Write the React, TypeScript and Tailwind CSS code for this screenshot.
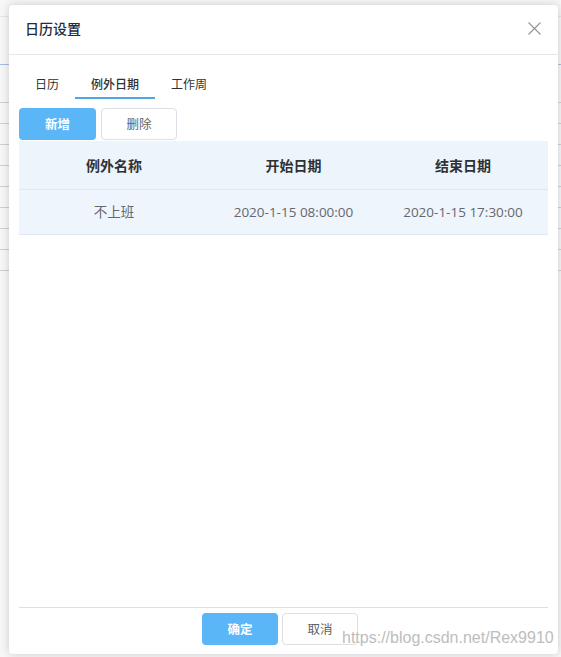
import React from "react";

const cjk = { fontFamily: '"Noto Sans CJK SC", "Noto Sans", sans-serif' };
const mixed = { fontFamily: '"Open Sans", "Noto Sans CJK SC", sans-serif' };

function BgLines() {
  const rows = [17, 48, 38, 21, 21, 21, 21, 21, 21, 21, 21];
  return (
    <div className="flex flex-col">
      {rows.map((h, i) => (
        <div
          key={i}
          style={{ height: h }}
          className={i === 1 ? "border-b border-[#a9bbe3]" : i === 0 ? "border-b border-[#e6e6e6]" : "border-b border-[#cfcfcf]"}
        />
      ))}
    </div>
  );
}

export default function App() {
  return (
    <div className="relative w-[561px] h-[657px] overflow-hidden bg-[#f7f7f7]" style={cjk}>
      <BgLines />
      <div className="absolute left-[9px] top-[5px] w-[549px] h-[649px] bg-white rounded-[4px] shadow-[0_0_10px_rgba(0,0,0,0.18)] flex flex-col">
        {/* header */}
        <div className="h-[50px] shrink-0 flex items-center justify-between pl-[16px] pr-[17px] pb-[3px] border-b border-[#e4e7ed]">
          <span className="text-[14px] font-medium text-[#1f2d3d] leading-none">日历设置</span>
          <svg width="13" height="13" viewBox="0 0 13 13" className="mt-[1px]">
            <path d="M0.5 0.5 L12.5 12.5 M12.5 0.5 L0.5 12.5" stroke="#909399" strokeWidth="1.1" fill="none" />
          </svg>
        </div>
        {/* body */}
        <div className="flex-1 flex flex-col px-[10px]">
          {/* tabs */}
          <div className="flex h-[44px] items-end">
            <div className="px-4 h-[24px] flex items-start text-[12px] text-[#303133]">日历</div>
            <div className="px-4 h-[24px] flex items-start text-[12px] text-[#303133] font-medium border-b-2 border-[#4ea6e6]">例外日期</div>
            <div className="px-4 h-[24px] flex items-start text-[12px] text-[#303133]">工作周</div>
          </div>
          {/* action buttons */}
          <div className="flex gap-[5px] mt-[9px]">
            <button className="w-[77px] h-[32px] rounded-[4px] bg-[#5bb6f8] text-white text-[12.5px] font-bold">新增</button>
            <button className="w-[76px] h-[32px] rounded-[4px] bg-white border border-[#dcdfe6] text-[#606266] text-[12.5px]">删除</button>
          </div>
          {/* table */}
          <div className="mt-[1px]">
            <div className="grid grid-cols-[190px_169px_1fr] h-[49px] bg-[#ecf4fc] border-b border-[#e2e8ef] items-center text-center text-[14px] font-bold text-[#303133]">
              <div>例外名称</div>
              <div>开始日期</div>
              <div>结束日期</div>
            </div>
            <div className="grid grid-cols-[190px_169px_1fr] h-[45px] bg-[#eef5fc] border-b border-[#e2e8ef] items-center text-center text-[13.5px] text-[#66686c]" style={mixed}>
              <div>不上班</div>
              <div>2020-1-15 08:00:00</div>
              <div>2020-1-15 17:30:00</div>
            </div>
          </div>
          <div className="flex-1" />
          {/* footer */}
          <div className="border-t border-[#dcdfe6] pt-[5px] pb-[9px] flex justify-center gap-[4px] pr-[7px]">
            <button className="w-[76px] h-[32px] rounded-[4px] bg-[#5bb6f8] text-white text-[12.5px] font-bold">确定</button>
            <button className="w-[76px] h-[32px] rounded-[4px] bg-white border border-[#dcdfe6] text-[#606266] text-[12.5px]">取消</button>
          </div>
        </div>
      </div>
      <div
        className="absolute left-[342px] top-[627px] text-[16px] leading-[22px] text-[#bdbdbd]"
        style={{ fontFamily: '"Liberation Sans", Arial, sans-serif', textShadow: "0 0 1px #fff" }}
      >
        https://blog.csdn.net/Rex9910
      </div>
    </div>
  );
}
